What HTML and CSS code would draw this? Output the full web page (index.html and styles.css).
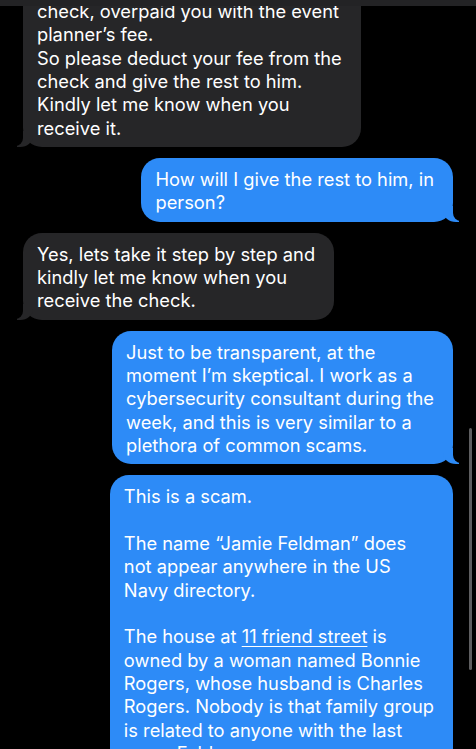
FILE: index.html
```html
<!DOCTYPE html>
<html lang="en">
  <head>
    <meta charset="UTF-8" />
    <title>Messages</title>
    <link rel="stylesheet" href="styles.css">
  </head>
  <body>
    <div class="top-bar"></div>

    <div id="thread">
      <div class="message received first">
        check, overpaid you with the event<br />
        planner’s fee.<br />
        So please deduct your fee from the<br />
        check and give the rest to him.<br />
        Kindly let me know when you<br />
        receive it.
      </div>

      <div class="message sent">
        How will I give the rest to him, in<br />
        person?
      </div>

      <div class="message received">
        Yes, lets take it step by step and<br />
        kindly let me know when you<br />
        receive the check.
      </div>

      <div class="message sent">
        Just to be transparent, at the<br />
        moment I’m skeptical. I work as a<br />
        cybersecurity consultant during the<br />
        week, and this is very similar to a<br />
        plethora of common scams.
      </div>

      <div class="message sent no-tail">
        This is a scam.<br />
        <br />
        The name “Jamie Feldman” does<br />
        not appear anywhere in the US<br />
        Navy directory.<br />
        <br />
        The house at <span class="link">11 friend street</span> is<br />
        owned by a woman named Bonnie<br />
        Rogers, whose husband is Charles<br />
        Rogers. Nobody is that family group<br />
        is related to anyone with the last<br />
        name Feldman.
      </div>
    </div>

    <div class="scrollbar"></div>
  </body>
</html>
```

FILE: styles.css
```css
body {
  margin: 0;
  height: 749px;
  overflow: hidden;
  background-color: #000;
  font-family: Inter, "Noto Sans", sans-serif;
  color: #fff;
  position: relative;
}

.top-bar {
  position: absolute;
  top: 0;
  left: 0;
  right: 0;
  height: 6px;
  background-color: #232325;
  z-index: 5;
}

#thread {
  display: flex;
  flex-direction: column;
  gap: 11px;
  padding: 0 23px;
  margin-top: -30px;
}

.message {
  position: relative;
  width: fit-content;
  padding: 10px 19px 7px 14px;
  border-radius: 19px;
  font-size: 18.3px;
  line-height: 23.33px;
  white-space: nowrap;
}

.received {
  align-self: flex-start;
  background-color: #262628;
}

.sent {
  align-self: flex-end;
  background-color: #2d8bf7;
}

/* bubble tails */
.message::before,
.message::after {
  content: "";
  position: absolute;
  bottom: 0;
  height: 16px;
}

.sent::before {
  right: -6px;
  border-right: 16px solid #2d8bf7;
  border-bottom-left-radius: 13px 11px;
}

.sent::after {
  right: -10px;
  width: 10px;
  bottom: 1px;
  background-color: #000;
  border-bottom-left-radius: 8px;
}

.received::before {
  left: -6px;
  border-left: 16px solid #262628;
  border-bottom-right-radius: 13px 11px;
}

.received::after {
  left: -10px;
  width: 10px;
  bottom: 1px;
  background-color: #000;
  border-bottom-right-radius: 8px;
}

.no-tail::before,
.no-tail::after {
  display: none;
}

.first {
  padding-top: 30px;
}

.link {
  text-decoration: underline;
  text-underline-offset: 3px;
  text-decoration-thickness: 1px;
}

.scrollbar {
  position: absolute;
  right: 4px;
  top: 428px;
  width: 3px;
  height: 242px;
  border-radius: 2px;
  background-color: #5e5e60;
}
```
